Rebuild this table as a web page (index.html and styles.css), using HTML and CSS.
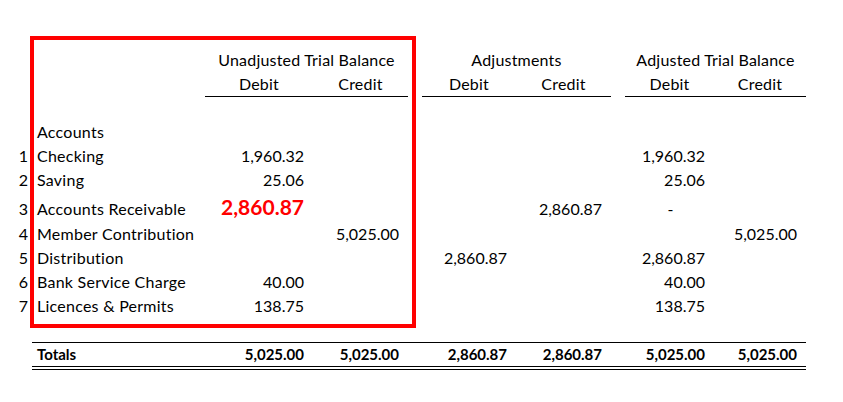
FILE: index.html
```html
<!DOCTYPE html>
<html>
<head>
<meta charset="utf-8">
<link rel="stylesheet" href="styles.css">
</head>
<body>
<div class="sheet">
  <table class="tb">
    <colgroup>
      <col class="c-num"><col class="c-label">
      <col class="c-ud"><col class="c-uc"><col class="c-gap">
      <col class="c-ad"><col class="c-ac"><col class="c-gap">
      <col class="c-jd"><col class="c-jc">
    </colgroup>
    <thead>
      <tr class="group">
        <th></th><th></th>
        <th colspan="2">Unadjusted Trial Balance</th><th></th>
        <th colspan="2">Adjustments</th><th></th>
        <th colspan="2">Adjusted Trial Balance</th>
      </tr>
      <tr class="sub">
        <th></th><th></th>
        <th class="ul">Debit</th><th class="ul">Credit</th><th></th>
        <th class="ul">Debit</th><th class="ul">Credit</th><th></th>
        <th class="ul">Debit</th><th class="ul">Credit</th>
      </tr>
    </thead>
    <tbody>
      <tr class="row"><td colspan="10"></td></tr>
      <tr class="row">
        <td class="n"></td><td class="label">Accounts</td>
        <td></td><td></td><td></td><td></td><td></td><td></td><td></td><td></td>
      </tr>
      <tr class="row">
        <td class="n">1</td><td class="label">Checking</td>
        <td class="amt">1,960.32</td><td></td><td></td>
        <td></td><td></td><td></td>
        <td class="amt">1,960.32</td><td></td>
      </tr>
      <tr class="row">
        <td class="n">2</td><td class="label">Saving</td>
        <td class="amt">25.06</td><td></td><td></td>
        <td></td><td></td><td></td>
        <td class="amt">25.06</td><td></td>
      </tr>
      <tr class="row row-tall">
        <td class="n">3</td><td class="label">Accounts Receivable</td>
        <td class="amt hot">2,860.87</td><td></td><td></td>
        <td></td><td class="amt">2,860.87</td><td></td>
        <td class="amt dash">-</td><td></td>
      </tr>
      <tr class="row">
        <td class="n">4</td><td class="label">Member Contribution</td>
        <td></td><td class="amt">5,025.00</td><td></td>
        <td></td><td></td><td></td>
        <td></td><td class="amt">5,025.00</td>
      </tr>
      <tr class="row">
        <td class="n">5</td><td class="label">Distribution</td>
        <td></td><td></td><td></td>
        <td class="amt">2,860.87</td><td></td><td></td>
        <td class="amt">2,860.87</td><td></td>
      </tr>
      <tr class="row">
        <td class="n">6</td><td class="label">Bank Service Charge</td>
        <td class="amt">40.00</td><td></td><td></td>
        <td></td><td></td><td></td>
        <td class="amt">40.00</td><td></td>
      </tr>
      <tr class="row">
        <td class="n">7</td><td class="label">Licences &amp; Permits</td>
        <td class="amt">138.75</td><td></td><td></td>
        <td></td><td></td><td></td>
        <td class="amt">138.75</td><td></td>
      </tr>
      <tr class="spacer"><td colspan="10"></td></tr>
      <tr class="totals">
        <td class="n plain"></td><td class="label">Totals</td>
        <td class="amt">5,025.00</td><td class="amt">5,025.00</td><td></td>
        <td class="amt">2,860.87</td><td class="amt">2,860.87</td><td></td>
        <td class="amt">5,025.00</td><td class="amt">5,025.00</td>
      </tr>
    </tbody>
  </table>
  <div class="highlight"></div>
</div>
</body>
</html>
```
FILE: styles.css
```css
html, body {
  margin: 0;
  background: #ffffff;
}

body {
  font-family: Lato, "Open Sans", sans-serif;
  font-size: 16px;
  color: #000000;
}

.sheet {
  position: relative;
  padding-top: 48px;
}

.tb {
  border-collapse: separate;
  border-spacing: 0;
  table-layout: fixed;
  width: 806px;
}

.c-num { width: 32px; }
.c-label { width: 173px; }
.c-ud { width: 108px; }
.c-uc { width: 95px; }
.c-gap { width: 14px; }
.c-ad { width: 94px; }
.c-ac { width: 95px; }
.c-jd { width: 89px; }
.c-jc { width: 92px; }

.tb th,
.tb td {
  padding: 0;
  font-weight: normal;
  line-height: 24px;
  white-space: nowrap;
  vertical-align: baseline;
}

.tb th {
  text-align: center;
  letter-spacing: 0.2px;
}

.tb .group,
.tb .sub,
.tb .row {
  height: 24px;
}

.tb .row-tall {
  height: 30px;
}

.tb .ul {
  border-bottom: 1px solid #000000;
}

.tb tbody .row td {
  line-height: 22px;
  padding-bottom: 2px;
}

.tb .n {
  text-align: right;
  padding-right: 4px;
}

.tb .label {
  text-align: left;
  padding-left: 5px;
  letter-spacing: 0.25px;
}

.tb .amt {
  text-align: right;
  padding-right: 9px;
}

.tb .dash {
  text-align: center;
  padding-right: 0;
  padding-left: 2px;
}

.tb tbody .row .hot {
  color: #ff0000;
  font-weight: 700;
  font-size: 21px;
  line-height: 28px;
  letter-spacing: 0;
}

.tb .spacer {
  height: 23px;
}

.tb .totals td {
  font-weight: 700;
  font-size: 15px;
  line-height: 23px;
  letter-spacing: 0;
  border-top: 1px solid #000000;
  border-bottom: 4px double #000000;
}

.tb .totals td.plain {
  border: 0;
}

.highlight {
  position: absolute;
  left: 30px;
  top: 36px;
  width: 386px;
  height: 292px;
  box-sizing: border-box;
  border: 4px solid #ff0000;
  pointer-events: none;
}
```
